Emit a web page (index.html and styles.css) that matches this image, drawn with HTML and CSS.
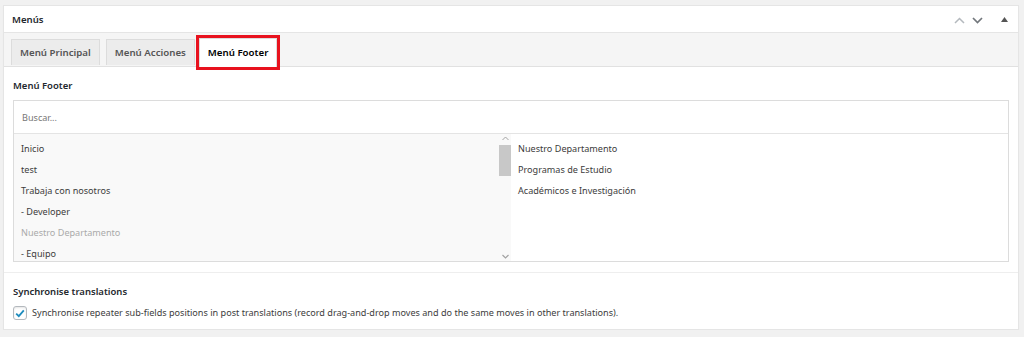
FILE: index.html
```html
<!DOCTYPE html>
<html lang="es">
<head>
    <meta charset="UTF-8">
    <meta name="viewport" content="width=device-width, initial-scale=1.0">
    <title>Menús</title>
    <link rel="stylesheet" href="styles.css">
</head>
<body>
    <div class="postbox">
        <!-- Header -->
        <div class="postbox-header">
            <h2>Menús</h2>
            <div class="handle-actions">
                <svg class="icon icon-up" width="11" height="7" viewBox="0 0 11 7"><path d="M1 6 L5.5 1.5 L10 6" fill="none" stroke="currentColor" stroke-width="1.5"/></svg>
                <svg class="icon icon-down" width="11" height="7" viewBox="0 0 11 7"><path d="M1 1 L5.5 5.5 L10 1" fill="none" stroke="currentColor" stroke-width="1.7"/></svg>
                <svg class="icon icon-toggle" width="7" height="5" viewBox="0 0 7 5"><path d="M0 5 L3.5 0 L7 5 Z" fill="currentColor"/></svg>
            </div>
        </div>

        <!-- Tabs -->
        <div class="tabs">
            <span class="tab">Menú Principal</span>
            <span class="tab">Menú Acciones</span>
            <span class="tab active">Menú Footer</span>
        </div>

        <!-- Relationship field -->
        <div class="field">
            <label class="field-label">Menú Footer</label>
            <div class="relationship">
                <div class="search">
                    <input type="text" placeholder="Buscar...">
                </div>
                <div class="lists">
                    <div class="choices">
                        <ul class="items">
                            <li>Inicio</li>
                            <li>test</li>
                            <li>Trabaja con nosotros</li>
                            <li>- Developer</li>
                            <li class="disabled">Nuestro Departamento</li>
                            <li>- Equipo</li>
                        </ul>
                        <div class="scrollbar">
                            <svg width="7" height="5" viewBox="0 0 7 5"><path d="M0.5 4 L3.5 1 L6.5 4" fill="none" stroke="currentColor" stroke-width="1"/></svg>
                            <div class="track"><div class="thumb"></div></div>
                            <svg width="7" height="5" viewBox="0 0 7 5"><path d="M0.5 1 L3.5 4 L6.5 1" fill="none" stroke="currentColor" stroke-width="1.2"/></svg>
                        </div>
                    </div>
                    <ul class="items values">
                        <li>Nuestro Departamento</li>
                        <li>Programas de Estudio</li>
                        <li>Académicos e Investigación</li>
                    </ul>
                </div>
            </div>
        </div>

        <!-- Synchronise -->
        <div class="field sync">
            <label class="field-label">Synchronise translations</label>
            <label class="check">
                <span class="checkbox">
                    <svg width="10" height="9" viewBox="0 0 10 9"><path d="M1.2 4.6 L3.8 7.2 L8.8 1.4" fill="none" stroke="#1e8cbe" stroke-width="1.8"/></svg>
                </span>
                Synchronise repeater sub-fields positions in post translations (record drag-and-drop moves and do the same moves in other translations).
            </label>
        </div>
    </div>
</body>
</html>
```

FILE: styles.css
```css
body {
    margin: 0;
    padding: 5px 5px 0 3px;
    background: #f1f1f1;
    font-family: "Noto Sans", sans-serif;
    font-size: 9.1px;
    line-height: 14px;
    color: #3c3c3c;
}
ul {
    margin: 0;
    padding: 0;
    list-style: none;
}
.postbox {
    background: #fff;
    border: 1px solid #e5e5e5;
    box-shadow: 0 1px 1px rgba(0, 0, 0, 0.04);
}
.postbox-header {
    display: flex;
    align-items: center;
    justify-content: space-between;
    height: 26px;
    padding: 1px 10px 0 8px;
    box-sizing: border-box;
    height: 27px;
    border-bottom: 1px solid #e5e5e5;
}
.postbox-header h2 {
    margin: 0;
    font-size: 9.6px;
    font-weight: 600;
    color: #23282d;
}
.handle-actions {
    display: flex;
    align-items: center;
    padding-top: 2px;
}
.icon-up {
    color: #b4b9be;
    margin-right: 7px;
}
.icon-down {
    color: #72777c;
    margin-right: 18px;
}
.icon-toggle {
    color: #555;
    margin-top: -2px;
}
.tabs {
    display: flex;
    gap: 6px;
    padding: 6px 0 0 7px;
    background: #f5f5f5;
    border-bottom: 1px solid #e1e1e1;
    height: 27px;
}
.tab {
    display: flex;
    align-items: center;
    height: 25px;
    padding: 0 8px;
    background: #ececec;
    border: 1px solid #dcdcdc;
    border-bottom: none;
    font-size: 9.7px;
    font-weight: 600;
    color: #555;
}
.tab.active {
    height: 28px;
    margin-top: -1px;
    margin-left: -2px;
    background: #fff;
    color: #000;
    outline: 3px solid #e8121e;
    position: relative;
    z-index: 1;
}
.field {
    padding: 12px 9px 10px;
}
.field-label {
    display: block;
    font-size: 9.5px;
    font-weight: 600;
    color: #23282d;
    margin-bottom: 7px;
}
.relationship {
    border: 1px solid #dcdcdc;
}
.search {
    border-bottom: 1px solid #e4e4e4;
}
.search input {
    box-sizing: border-box;
    display: block;
    width: 100%;
    height: 32px;
    border: none;
    padding: 0 8px;
    font: inherit;
    color: #444;
    outline: none;
}
.search input::placeholder {
    color: #777;
}
.lists {
    display: flex;
    height: 127px;
}
.choices {
    width: 50%;
    display: flex;
    background: #f9f9f9;
    overflow: hidden;
}
.items {
    flex: 1;
    padding-top: 4px;
}
.items li {
    line-height: 21px;
    padding: 0 7px;
    white-space: nowrap;
}
.items li.disabled {
    color: #aaa;
}
.values {
    width: 50%;
    background: #fff;
}
.scrollbar {
    width: 12px;
    display: flex;
    flex-direction: column;
    align-items: center;
    color: #a3a3a3;
    padding: 2px 0;
}
.track {
    flex: 1;
    align-self: stretch;
    padding-top: 4px;
}
.thumb {
    height: 31px;
    background: #c8c8c8;
}
.sync {
    border-top: 1px solid #eee;
    padding-top: 12px;
    padding-bottom: 9px;
}
.sync .field-label {
    margin-bottom: 7px;
}
.check {
    display: flex;
    align-items: center;
    gap: 5px;
}
.checkbox {
    display: flex;
    align-items: center;
    justify-content: center;
    width: 12px;
    height: 12px;
    border: 1px solid #b4b9be;
    border-radius: 3px;
    box-shadow: inset 0 1px 2px rgba(0, 0, 0, 0.1);
}
```
